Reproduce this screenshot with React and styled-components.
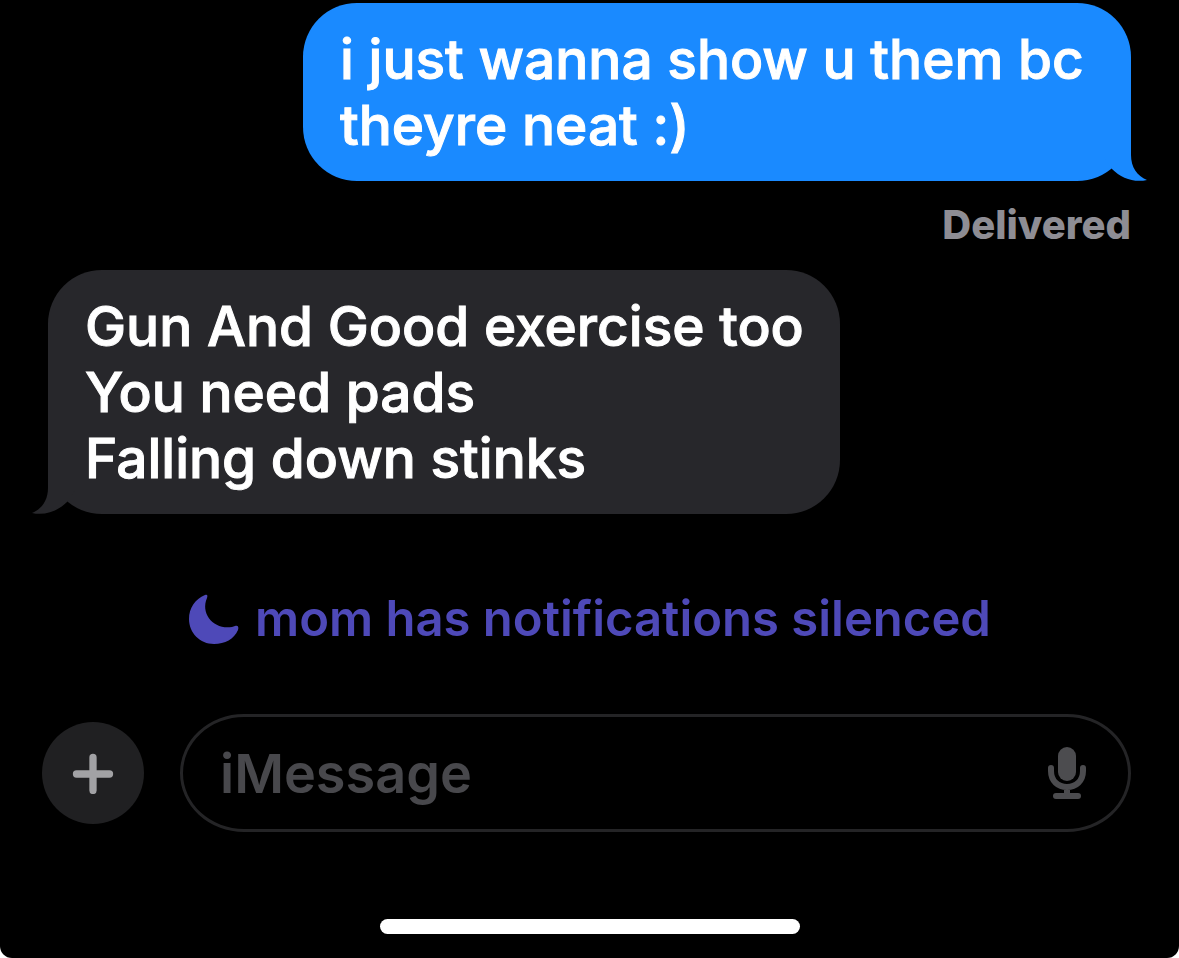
import React from "react";
import styled, { createGlobalStyle } from "styled-components";

const GlobalStyle = createGlobalStyle`
  * { box-sizing: border-box; }
  html { background: #fff; }
  body { margin: 0; font-family: Inter, "Liberation Sans", sans-serif; }
`;

const Screen = styled.div`
  display: flex;
  flex-direction: column;
  min-height: 100vh;
  padding: 3px 48px 24px;
  background: #000;
  border-radius: 0 0 12px 12px;
  overflow: hidden;
`;

const Thread = styled.main`
  display: flex;
  flex-direction: column;
`;

const Bubble = styled.div`
  position: relative;
  align-self: ${(p) => (p.$sent ? "flex-end" : "flex-start")};
  max-width: 828px;
  padding: 23px 36px 23px 37px;
  border-radius: 54px;
  background: ${(p) => (p.$sent ? "#1a8aff" : "#27272b")};
  color: #fff;
  font-size: 55px;
  font-weight: 500;
  line-height: 66px;
  white-space: pre-line;
  -webkit-text-stroke: 1px currentColor;
`;

const TailShape = styled.svg`
  position: absolute;
  bottom: 0;
  ${(p) => (p.$sent ? "right: -17px;" : "left: -17px; transform: scaleX(-1);")}
  fill: ${(p) => (p.$sent ? "#1a8aff" : "#27272b")};
`;

const Receipt = styled.p`
  align-self: flex-end;
  margin: 20px 0 21px;
  color: #8e8d94;
  font-size: 40px;
  font-weight: 800;
  line-height: 48px;
`;

const FocusStatus = styled.p`
  display: flex;
  align-items: center;
  justify-content: center;
  gap: 16px;
  margin: 72px 0 62px;
  color: #4e49b8;
  font-size: 49px;
  font-weight: 600;
  line-height: 66px;
`;

const Composer = styled.form`
  display: flex;
  align-items: center;
  gap: 36px;
  margin-left: -6px;
`;

const AddButton = styled.button`
  display: grid;
  place-items: center;
  flex: none;
  width: 102px;
  height: 102px;
  padding: 0;
  border: 0;
  border-radius: 50%;
  background: #202022;
`;

const Field = styled.div`
  display: flex;
  align-items: center;
  flex: 1;
  min-width: 0;
  height: 118px;
  padding: 0 41px 0 37px;
  border: 3px solid #242426;
  border-radius: 64px / 59px;
`;

const MessageInput = styled.input`
  flex: 1;
  min-width: 0;
  height: 72px;
  padding: 0;
  border: 0;
  outline: 0;
  background: transparent;
  color: #fff;
  font-family: inherit;
  font-size: 54px;
  font-weight: 600;
  &::placeholder { color: #48484c; opacity: 1; }
`;

const MicButton = styled.button`
  display: grid;
  flex: none;
  padding: 0;
  border: 0;
  background: transparent;
`;

const HomeIndicator = styled.div`
  align-self: center;
  width: 420px;
  max-width: 100%;
  height: 15px;
  margin-top: auto;
  border-radius: 8px;
  background: #fff;
`;

function Tail({ sent }) {
  return (
    <TailShape $sent={sent} width="54" height="54" viewBox="0 0 54 54" aria-hidden="true">
      <path d="M10 0H37V28C37 40 43 49 53 53C40 56 27 51 18 42L10 30Z" />
    </TailShape>
  );
}

export default function App() {
  return (
    <>
      <GlobalStyle />
      <Screen>
        <Thread>
          <Bubble $sent>
            i just wanna show u them bc theyre neat :)
            <Tail sent />
          </Bubble>
          <Receipt>Delivered</Receipt>
          <Bubble>
            {"Gun And Good exercise too\nYou need pads\nFalling down stinks"}
            <Tail />
          </Bubble>
        </Thread>
        <FocusStatus>
          <svg width="51" height="51" viewBox="0 0 51 51" aria-hidden="true">
            <path
              d="M17 1C19 0 20 1 19 4C12 20 26 36 44 33L47 32C50 31 51 33 50 36C46 45 37 50 26 50C12 50 1 39 1 25C1 14 7 5 17 1Z"
              fill="currentColor"
            />
          </svg>
          <span>mom has notifications silenced</span>
        </FocusStatus>
        <Composer onSubmit={(e) => e.preventDefault()}>
          <AddButton type="button" aria-label="Add attachment">
            <svg width="42" height="42" viewBox="0 0 42 42" aria-hidden="true">
              <path d="M21 5.5V38.5M4.5 22H37.5" stroke="#a2a2a5" strokeWidth="7.3" strokeLinecap="round" />
            </svg>
          </AddButton>
          <Field>
            <MessageInput type="text" placeholder="iMessage" aria-label="iMessage" />
            <MicButton type="button" aria-label="Dictate">
              <svg width="40" height="54" viewBox="0 0 40 54" fill="none" stroke="#4c4c4f" aria-hidden="true">
                <rect x="11" y="1" width="18" height="34" rx="9" fill="#4c4c4f" stroke="none" />
                <path d="M4 22V25C4 35 11 41 20 41S36 35 36 25V22M20 41V50M9 50H31" strokeWidth="6" strokeLinecap="round" />
              </svg>
            </MicButton>
          </Field>
        </Composer>
        <HomeIndicator />
      </Screen>
    </>
  );
}
